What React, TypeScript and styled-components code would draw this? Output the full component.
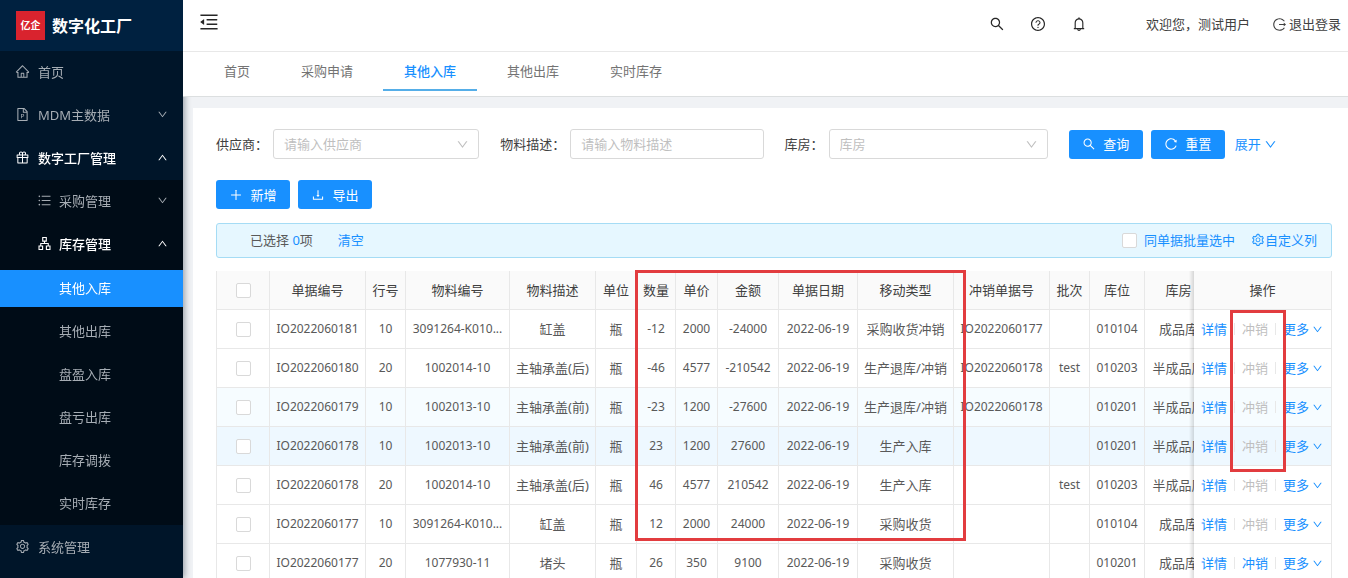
import React from "react";
import styled, { createGlobalStyle, css } from "styled-components";
import {
  AiOutlineApartment,
  AiOutlineBell,
  AiOutlineDown,
  AiOutlineDownload,
  AiOutlineFilePpt,
  AiOutlineGift,
  AiOutlineHome,
  AiOutlineLogout,
  AiOutlineMenuFold,
  AiOutlinePlus,
  AiOutlineQuestionCircle,
  AiOutlineReload,
  AiOutlineSearch,
  AiOutlineSetting,
  AiOutlineUnorderedList,
  AiOutlineUp,
} from "react-icons/ai";

const GlobalStyle = createGlobalStyle`
  *, *::before, *::after { box-sizing: border-box; }
  body {
    margin: 0;
    background: #f0f2f5;
    color: #595959;
    font: 13px/20px "Noto Sans", "Noto Sans CJK SC", sans-serif;
  }
  button, input, select { font: inherit; color: inherit; }
  button { cursor: pointer; }
  a { color: #1890ff; text-decoration: none; }
  svg { display: block; flex: none; }
`;

const Page = styled.div`
  display: flex;
  height: 100vh;
  overflow: hidden;
`;

/* ---------- sidebar ---------- */

const Sidebar = styled.aside`
  flex: none;
  z-index: 1;
  width: 183px;
  background: #001529;
  box-shadow: 2px 0 6px rgba(0, 21, 41, 0.35);
  overflow: hidden;
`;

const Brand = styled.div`
  display: flex;
  align-items: center;
  gap: 7px;
  height: 51px;
  padding-left: 16px;
  background: #002140;
`;

const BrandMark = styled.span`
  width: 29px;
  height: 29px;
  background: #d9232e;
  color: #fff;
  font-size: 10px;
  font-weight: 700;
  line-height: 29px;
  text-align: center;
`;

const BrandName = styled.h1`
  margin: 0;
  color: #fff;
  font-size: 16px;
  font-weight: 700;
  line-height: 24px;
`;

const MenuList = styled.ul`
  display: grid;
  gap: 6px;
  margin: 0;
  padding: 3px 0;
  list-style: none;
`;

const Submenu = styled(MenuList)`
  margin: 3px 0 -2px;
  background: #000c17;
`;

const Leaves = styled(MenuList)`
  padding: 7px 0 0;
`;

const MenuLink = styled.a<{ $depth?: number; $open?: boolean; $active?: boolean }>`
  display: flex;
  align-items: center;
  gap: ${(p) => (p.$depth ? 7 : 8)}px;
  height: 37px;
  padding: 0 15px 2px ${(p) => [15, 37, 59][p.$depth ?? 0]}px;
  color: ${(p) => (p.$open || p.$active ? "#fff" : "#a6adb4")};
  background: ${(p) => (p.$active ? "#1890ff" : "transparent")};
  font-weight: ${(p) => (p.$open ? 500 : 400)};

  svg:first-child { width: 15px; height: 15px; }
  span { flex: 1; }
`;

/* ---------- header and tabs ---------- */

const Main = styled.div`
  display: flex;
  flex: 1;
  flex-direction: column;
  min-width: 0;
`;

const TopArea = styled.div`
  position: relative;
  flex: none;
  z-index: 2;
  background: #fff;
`;

const Header = styled.header`
  display: flex;
  align-items: center;
  height: 52px;
  padding: 0 7px 3px 15px;
  border-bottom: 1px solid #e8e8e8;
  color: #404040;
`;

const IconButton = styled.button`
  display: flex;
  padding: 0;
  border: 0;
  background: none;
  color: #262626;
`;

const FoldButton = styled(IconButton)`
  padding-bottom: 4px;
`;

const HeaderTools = styled.div`
  display: flex;
  gap: 25px;
  margin: 0 59px 0 auto;
`;

const Welcome = styled.span`
  margin-right: 22px;
`;

const Logout = styled.a`
  display: flex;
  align-items: center;
  gap: 2px;
  color: #404040;
`;

const Tabs = styled.nav`
  display: flex;
  gap: 9px;
  height: 45px;
  padding: 0 20px;
  border-bottom: 1px solid #dcdfe0;
`;

const Tab = styled.a<{ $active?: boolean }>`
  height: 39px;
  padding: 9px 21px 0;
  border-bottom: 2px solid ${(p) => (p.$active ? "#55aee8" : "transparent")};
  color: ${(p) => (p.$active ? "#1890ff" : "#737373")};
  font-weight: ${(p) => (p.$active ? 500 : 400)};
`;

/* ---------- filters and actions ---------- */

const Card = styled.main`
  flex: 1;
  min-height: 0;
  margin: 11px 0 0 10px;
  padding: 21px 16px 24px 23px;
  background: #fff;
  overflow-y: auto;
  scrollbar-width: none;
`;

const Filters = styled.form`
  display: grid;
  grid-template-columns: repeat(4, minmax(0, 1fr));
  gap: 21px;
`;

const Field = styled.div`
  display: flex;
  align-items: center;
  gap: 5px;
  color: #404040;

  label { flex: none; }
`;

const controlStyle = css`
  width: 100%;
  min-width: 0;
  height: 30px;
  padding: 0 10px;
  border: 1px solid #d9d9d9;
  border-radius: 3px;
  background: #fff;
  outline: none;
`;

const TextInput = styled.input`
  ${controlStyle}
  &::placeholder { color: #bfbfbf; }
`;

const SelectBox = styled.div`
  position: relative;
  flex: 1;
  min-width: 0;

  select {
    ${controlStyle}
    appearance: none;
    color: #bfbfbf;
  }
  svg {
    position: absolute;
    top: 9px;
    right: 10px;
    color: #bfbfbf;
    pointer-events: none;
  }
`;

const ButtonRow = styled.div<{ $spaced?: boolean }>`
  display: flex;
  align-items: center;
  gap: 8px;
  margin: ${(p) => (p.$spaced ? "21px 0 14px" : "0")};
`;

const PrimaryButton = styled.button`
  display: flex;
  align-items: center;
  justify-content: center;
  gap: 7px;
  width: 74px;
  height: 29px;
  padding: 0;
  border: 0;
  border-radius: 3px;
  background: #1890ff;
  color: #fff;
`;

const Expand = styled.a`
  display: flex;
  align-items: center;
  gap: 3px;
  padding-left: 2px;
`;

const SelectionBar = styled.div`
  display: flex;
  align-items: center;
  height: 35px;
  margin-bottom: 13px;
  padding: 0 14px 1px 33px;
  border: 1px solid #a5dcf5;
  border-radius: 3px;
  background: #e6f7ff;

  > a:first-of-type { margin-left: 25px; }
  > label { margin-left: auto; }
`;

const Highlight = styled.span`
  color: #1890ff;
`;

const BatchLabel = styled.label`
  display: flex;
  align-items: center;
  gap: 7px;
  margin-right: 16px;
  color: #1890ff;
`;

const ColumnsLink = styled.a`
  display: flex;
  align-items: center;
`;

const Checkbox = styled.input.attrs({ type: "checkbox" })`
  display: block;
  appearance: none;
  width: 15px;
  height: 15px;
  margin: 0;
  border: 1px solid #d9d9d9;
  border-radius: 2px;
  background: #fff;

  &:checked { background: #1890ff; border-color: #1890ff; }
  td &, th & { margin: 0 auto; }
`;

/* ---------- table ---------- */

const TableFrame = styled.div`
  position: relative;
`;

const Scroller = styled.div`
  overflow-x: auto;
  scrollbar-width: none;
`;

const Table = styled.table`
  width: 100%;
  min-width: 1135px;
  table-layout: fixed;
  border-collapse: separate;
  border-spacing: 0;
`;

const cellStyle = css`
  height: 39px;
  padding: 0;
  border-right: 1px solid #e8e8e8;
  border-bottom: 1px solid #e8e8e8;
  text-align: center;
  white-space: nowrap;

  &:first-child { border-left: 1px solid #e8e8e8; }
  &:last-child {
    position: sticky;
    right: 0;
  }
  &:last-child::before {
    content: "";
    position: absolute;
    top: 0;
    bottom: -1px;
    left: -5px;
    width: 5px;
    background: linear-gradient(to left, rgba(0, 0, 0, 0.14), transparent);
  }
`;

const HeadCell = styled.th`
  ${cellStyle}
  background: #fafafa;
  color: #404040;
  font-weight: 400;
`;

const Cell = styled.td<{ $number?: boolean }>`
  ${cellStyle}
  background: inherit;
  font-size: ${(p) => (p.$number ? 12 : 13)}px;
`;

const Row = styled.tr<{ $tint?: string }>`
  background: ${(p) => p.$tint ?? "#fff"};
`;

const Actions = styled.div`
  display: flex;
  align-items: center;
  padding-left: 7px;
`;

const ActionLink = styled.a<{ $disabled?: boolean }>`
  display: flex;
  align-items: center;
  gap: 3px;
  color: ${(p) => (p.$disabled ? "#bfbfbf" : "#1890ff")};

  & + & {
    margin-left: 7px;
    padding-left: 8px;
    background: linear-gradient(#e8e8e8, #e8e8e8) left center / 1px 12px no-repeat;
  }
`;

/* Red frames that call out the reversal columns. */
const Callout = styled.div<{ $area: "amounts" | "reversal" }>`
  position: absolute;
  border: 3px solid #e23c3f;
  pointer-events: none;
  ${(p) =>
    p.$area === "amounts"
      ? "top: -1px; left: 419px; width: 331px; height: 271px;"
      : "top: 39px; right: 46px; width: 56px; height: 162px;"}
`;

const columns: [string, number][] = [
  ["单据编号", 96],
  ["行号", 40],
  ["物料编号", 104],
  ["物料描述", 86],
  ["单位", 41],
  ["数量", 39],
  ["单价", 42],
  ["金额", 61],
  ["单据日期", 79],
  ["移动类型", 96],
  ["冲销单据号", 96],
  ["批次", 40],
  ["库位", 55],
  ["库房", 68],
];

const numberColumns = [0, 1, 2, 5, 6, 7, 8, 10, 11, 12];

const rows: { cells: string[]; tint?: string; reversible?: boolean }[] = [
  { cells: ["IO2022060181", "10", "3091264-K010...", "缸盖", "瓶", "-12", "2000", "-24000", "2022-06-19", "采购收货冲销", "IO2022060177", "", "010104", "成品库"] },
  { cells: ["IO2022060180", "20", "1002014-10", "主轴承盖(后)", "瓶", "-46", "4577", "-210542", "2022-06-19", "生产退库/冲销", "IO2022060178", "test", "010203", "半成品库"] },
  { cells: ["IO2022060179", "10", "1002013-10", "主轴承盖(前)", "瓶", "-23", "1200", "-27600", "2022-06-19", "生产退库/冲销", "IO2022060178", "", "010201", "半成品库"], tint: "#f6fcff" },
  { cells: ["IO2022060178", "10", "1002013-10", "主轴承盖(前)", "瓶", "23", "1200", "27600", "2022-06-19", "生产入库", "", "", "010201", "半成品库"], tint: "#eef8ff" },
  { cells: ["IO2022060178", "20", "1002014-10", "主轴承盖(后)", "瓶", "46", "4577", "210542", "2022-06-19", "生产入库", "", "test", "010203", "半成品库"] },
  { cells: ["IO2022060177", "10", "3091264-K010...", "缸盖", "瓶", "12", "2000", "24000", "2022-06-19", "采购收货", "", "", "010104", "成品库"] },
  { cells: ["IO2022060177", "20", "1077930-11", "堵头", "瓶", "26", "350", "9100", "2022-06-19", "采购收货", "", "", "010201", "成品库"], reversible: true },
];

const leaves = ["其他入库", "其他出库", "盘盈入库", "盘亏出库", "库存调拨", "实时库存"];
const tabs = ["首页", "采购申请", "其他入库", "其他出库", "实时库存"];

export default function App() {
  return (
    <>
      <GlobalStyle />
      <Page>
        <Sidebar>
          <Brand>
            <BrandMark>亿企</BrandMark>
            <BrandName>数字化工厂</BrandName>
          </Brand>
          <MenuList>
            <li><MenuLink href="#"><AiOutlineHome /><span>首页</span></MenuLink></li>
            <li><MenuLink href="#"><AiOutlineFilePpt /><span>MDM主数据</span><AiOutlineDown size={11} /></MenuLink></li>
            <li>
              <MenuLink href="#" $open><AiOutlineGift /><span>数字工厂管理</span><AiOutlineUp size={11} /></MenuLink>
              <Submenu>
                <li><MenuLink href="#" $depth={1}><AiOutlineUnorderedList /><span>采购管理</span><AiOutlineDown size={11} /></MenuLink></li>
                <li>
                  <MenuLink href="#" $depth={1} $open><AiOutlineApartment /><span>库存管理</span><AiOutlineUp size={11} /></MenuLink>
                  <Leaves>
                    {leaves.map((name, i) => (
                      <li key={name}><MenuLink href="#" $depth={2} $active={i === 0}><span>{name}</span></MenuLink></li>
                    ))}
                  </Leaves>
                </li>
              </Submenu>
            </li>
            <li><MenuLink href="#"><AiOutlineSetting /><span>系统管理</span></MenuLink></li>
          </MenuList>
        </Sidebar>

        <Main>
          <TopArea>
            <Header>
              <FoldButton aria-label="收起菜单"><AiOutlineMenuFold size={22} /></FoldButton>
              <HeaderTools>
                <IconButton aria-label="搜索"><AiOutlineSearch size={16} /></IconButton>
                <IconButton aria-label="帮助"><AiOutlineQuestionCircle size={16} /></IconButton>
                <IconButton aria-label="通知"><AiOutlineBell size={16} /></IconButton>
              </HeaderTools>
              <Welcome>欢迎您，测试用户</Welcome>
              <Logout href="#"><AiOutlineLogout size={15} />退出登录</Logout>
            </Header>
            <Tabs>
              {tabs.map((name, i) => (
                <Tab key={name} href="#" $active={i === 2}>{name}</Tab>
              ))}
            </Tabs>
          </TopArea>

          <Card>
            <Filters>
              <Field>
                <label htmlFor="supplier">供应商：</label>
                <SelectBox>
                  <select id="supplier"><option>请输入供应商</option></select>
                  <AiOutlineDown size={13} />
                </SelectBox>
              </Field>
              <Field>
                <label htmlFor="material">物料描述：</label>
                <TextInput id="material" placeholder="请输入物料描述" />
              </Field>
              <Field>
                <label htmlFor="store">库房：</label>
                <SelectBox>
                  <select id="store"><option>库房</option></select>
                  <AiOutlineDown size={13} />
                </SelectBox>
              </Field>
              <ButtonRow>
                <PrimaryButton type="button"><AiOutlineSearch size={14} />查询</PrimaryButton>
                <PrimaryButton type="button"><AiOutlineReload size={14} />重置</PrimaryButton>
                <Expand href="#">展开<AiOutlineDown size={13} /></Expand>
              </ButtonRow>
            </Filters>

            <ButtonRow $spaced>
              <PrimaryButton><AiOutlinePlus size={14} />新增</PrimaryButton>
              <PrimaryButton><AiOutlineDownload size={14} />导出</PrimaryButton>
            </ButtonRow>

            <SelectionBar>
              <span>已选择 <Highlight>0</Highlight>项</span>
              <a href="#">清空</a>
              <BatchLabel><Checkbox />同单据批量选中</BatchLabel>
              <ColumnsLink href="#"><AiOutlineSetting size={14} />自定义列</ColumnsLink>
            </SelectionBar>

            <TableFrame>
              <Scroller>
                <Table>
                  <colgroup>
                    <col width={54} />
                    {columns.map(([name, width]) => <col key={name} width={width} />)}
                    <col width={138} />
                  </colgroup>
                  <thead>
                    <tr>
                      <HeadCell><Checkbox aria-label="全选" /></HeadCell>
                      {columns.map(([name]) => <HeadCell key={name}>{name}</HeadCell>)}
                      <HeadCell>操作</HeadCell>
                    </tr>
                  </thead>
                  <tbody>
                    {rows.map((row, r) => (
                      <Row key={r} $tint={row.tint}>
                        <Cell><Checkbox aria-label={`选择 ${row.cells[0]}`} /></Cell>
                        {row.cells.map((text, c) => (
                          <Cell key={c} $number={numberColumns.includes(c)}>{text}</Cell>
                        ))}
                        <Cell>
                          <Actions>
                            <ActionLink href="#">详情</ActionLink>
                            <ActionLink href="#" $disabled={!row.reversible}>冲销</ActionLink>
                            <ActionLink href="#">更多<AiOutlineDown size={11} /></ActionLink>
                          </Actions>
                        </Cell>
                      </Row>
                    ))}
                  </tbody>
                </Table>
              </Scroller>
              <Callout $area="amounts" />
              <Callout $area="reversal" />
            </TableFrame>
          </Card>
        </Main>
      </Page>
    </>
  );
}
